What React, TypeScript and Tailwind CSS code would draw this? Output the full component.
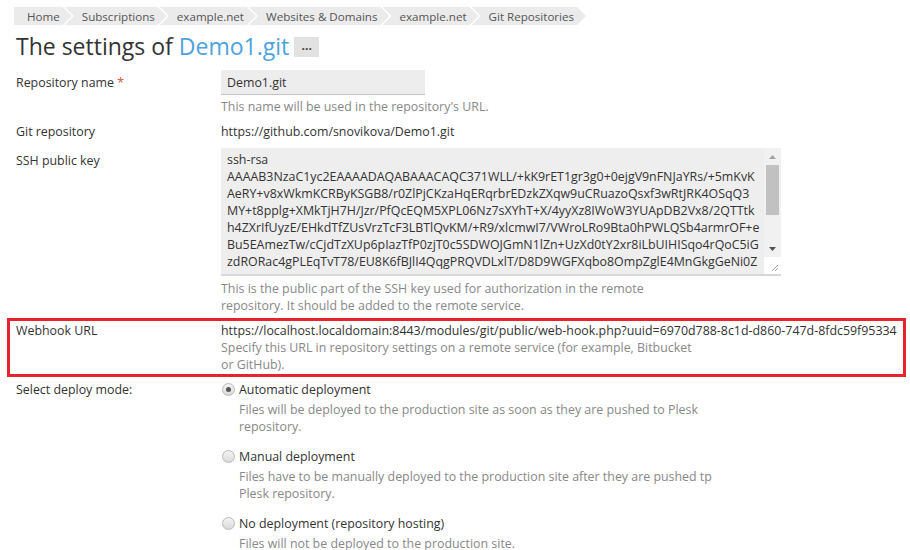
import React from 'react';

const crumbs = ['Home', 'Subscriptions', 'example.net', 'Websites & Domains', 'example.net', 'Git Repositories'];

const sshKey = [
  'ssh-rsa',
  'AAAAB3NzaC1yc2EAAAADAQABAAACAQC371WLL/+kK9rET1gr3g0+0ejgV9nFNJaYRs/+5mKvK',
  'AeRY+v8xWkmKCRByKSGB8/r0ZlPjCKzaHqERqrbrEDzkZXqw9uCRuazoQsxf3wRtJRK4OSqQ3',
  'MY+t8pplg+XMkTjH7H/Jzr/PfQcEQM5XPL06Nz7sXYhT+X/4yyXz8IWoW3YUApDB2Vx8/2QTTtk',
  'h4ZXrIfUyzE/EHkdTfZUsVrzTcF3LBTlQvKM/+R9/xlcmwI7/VWroLRo9Bta0hPWLQSb4armrOF+e',
  'Bu5EAmezTw/cCjdTzXUp6pIazTfP0zjT0c5SDWOJGmN1lZn+UzXd0tY2xr8iLbUIHISqo4rQoC5iG',
  'zdRORac4gPLEqTvT78/EU8K6fBJlI4QqgPRQVDLxlT/D8D9WGFXqbo8OmpZglE4MnGkgGeNi0Z',
];

const modes = [
  {
    title: 'Automatic deployment',
    desc: ['Files will be deployed to the production site as soon as they are pushed to Plesk', 'repository.'],
    checked: true,
  },
  {
    title: 'Manual deployment',
    desc: ['Files have to be manually deployed to the production site after they are pushed tp', 'Plesk repository.'],
    checked: false,
  },
  {
    title: 'No deployment (repository hosting)',
    desc: ['Files will not be deployed to the production site.'],
    checked: false,
  },
];

function Radio({ checked }: { checked: boolean }) {
  return (
    <span className="mt-[2px] flex h-[13px] w-[13px] shrink-0 items-center justify-center rounded-full border border-[#b9b9b9] bg-gradient-to-b from-[#f4f4f4] to-[#d9d9d9]">
      {checked && <span className="h-[5px] w-[5px] rounded-full bg-[#555]" />}
    </span>
  );
}

function Scrollbar() {
  return (
    <div className="flex w-[17px] shrink-0 flex-col bg-[#f1f1f1]">
      <div className="flex h-[17px] items-center justify-center">
        <svg width="7" height="4" viewBox="0 0 7 4">
          <path d="M0 4 L3.5 0 L7 4 Z" fill="#a3a3a3" />
        </svg>
      </div>
      <div className="mx-[2px] h-[50px] bg-[#c1c1c1]" />
      <div className="flex-1" />
      <div className="flex h-[17px] items-center justify-center">
        <svg width="7" height="4" viewBox="0 0 7 4">
          <path d="M0 0 L3.5 4 L7 0 Z" fill="#505050" />
        </svg>
      </div>
      <div className="flex h-[17px] items-end justify-end bg-white pb-[2px] pr-[2px]">
        <svg width="8" height="8" viewBox="0 0 8 8">
          <path d="M7 1 L1 7 M7 4 L4 7" stroke="#a0a0a0" strokeWidth="1" />
        </svg>
      </div>
    </div>
  );
}

export default function App() {
  return (
    <div
      className="min-h-[550px] w-[910px] bg-white pt-[7px] text-[12.4px] leading-[17px] text-[#333]"
      style={{ fontFamily: '"Open Sans", "Noto Sans", sans-serif' }}
    >
      {/* breadcrumbs */}
      <div className="flex pl-[14px]">
        {crumbs.map((c, i) => (
          <div
            key={i}
            className={
              i === 0
                ? 'flex h-[18px] items-center bg-[#ebebeb] pl-[13px] pr-[12px] text-[11.6px] text-[#555] [clip-path:polygon(0_0,calc(100%-9px)_0,100%_50%,calc(100%-9px)_100%,0_100%)]'
                : '-ml-[7px] flex h-[18px] items-center bg-[#ebebeb] pl-[17px] pr-[12px] text-[11.6px] text-[#555] [clip-path:polygon(0_0,calc(100%-9px)_0,100%_50%,calc(100%-9px)_100%,0_100%,9px_50%)]'
            }
          >
            {c}
          </div>
        ))}
      </div>

      {/* title */}
      <div className="mt-[7px] flex items-center pl-[16px]">
        <h1 className="text-[23px] leading-[28px] font-normal text-[#333]">
          The settings of <span className="text-[#4da3e0]">Demo1.git</span>
        </h1>
        <span className="ml-[5px] mt-[2px] flex h-[20px] w-[25px] items-center justify-center bg-[#e2e2e2] pb-[4px] text-[12px] font-bold text-[#444]">
          ...
        </span>
      </div>

      {/* repository name */}
      <div className="mt-[10px] flex pl-[16px]">
        <div className="w-[205px] shrink-0 pt-[4px]">
          Repository name <span className="text-[#e0513b]">*</span>
        </div>
        <div>
          <div className="flex h-[25px] w-[204px] items-center border-b border-[#c4c4c4] bg-[#ededed] px-[6px]">Demo1.git</div>
          <div className="mt-[3px] text-[#888]">This name will be used in the repository's URL.</div>
        </div>
      </div>

      {/* git repository */}
      <div className="mt-[8px] flex pl-[16px]">
        <div className="w-[205px] shrink-0">Git repository</div>
        <div>https://github.com/snovikova/Demo1.git</div>
      </div>

      {/* ssh key */}
      <div className="mt-[8px] flex pl-[16px]">
        <div className="w-[205px] shrink-0 pt-[4px]">SSH public key</div>
        <div>
          <div className="flex h-[128px] w-[560px] overflow-hidden border-b-2 border-[#d6d6d6] bg-[#eeeeee]">
            <div className="flex-1 overflow-hidden whitespace-nowrap pl-[6px] pt-[3px] text-[#333]">
              {sshKey.map((l, i) => (
                <div key={i}>{l}</div>
              ))}
            </div>
            <Scrollbar />
          </div>
          <div className="mt-[4px] text-[#888]">
            This is the public part of the SSH key used for authorization in the remote
            <br />
            repository. It should be added to the remote service.
          </div>
        </div>
      </div>

      {/* webhook */}
      <div className="ml-[7px] mt-[4px] flex w-[899px] border-[3px] border-[#e8222e] py-[1px] pl-[6px]">
        <div className="w-[205px] shrink-0">Webhook URL</div>
        <div>
          <div className="whitespace-nowrap">
            https://localhost.localdomain:8443/modules/git/public/web-hook.php?uuid=6970d788-8c1d-d860-747d-8fdc59f95334
          </div>
          <div className="text-[#888]">
            Specify this URL in repository settings on a remote service (for example, Bitbucket
            <br />
            or GitHub).
          </div>
        </div>
      </div>

      {/* deploy mode */}
      <div className="mt-[4px] flex pl-[16px]">
        <div className="w-[205px] shrink-0">Select deploy mode:</div>
        <div className="flex flex-col gap-[13px] pl-[1px]">
          {modes.map((m, i) => (
            <div key={i} className="flex gap-[4px]">
              <Radio checked={m.checked} />
              <div>
                <div>{m.title}</div>
                <div className="mt-[3px] text-[#888]">
                  {m.desc.map((d, j) => (
                    <div key={j}>{d}</div>
                  ))}
                </div>
              </div>
            </div>
          ))}
        </div>
      </div>
    </div>
  );
}
